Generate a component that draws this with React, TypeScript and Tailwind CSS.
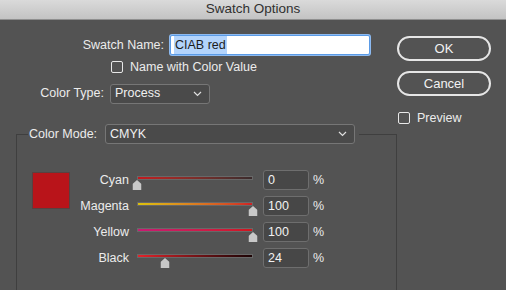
import React from 'react';

type Channel = {
  name: string;
  value: number;
  track: string;
};

const channels: Channel[] = [
  { name: 'Cyan', value: 0, track: 'bg-linear-to-r from-[#c4171d] to-[#3a2b2c]' },
  { name: 'Magenta', value: 100, track: 'bg-linear-to-r from-[#dcc10a] to-[#cf2024]' },
  { name: 'Yellow', value: 100, track: 'bg-linear-to-r from-[#c91a73] to-[#d2161b]' },
  { name: 'Black', value: 24, track: 'bg-linear-to-r from-[#e5222a] to-[#1c0405]' },
];

const font = "font-['Liberation_Sans',_Arial,_sans-serif]";

function Chevron() {
  return (
    <svg width="9" height="6" viewBox="0 0 9 6" fill="none">
      <path d="M1 1l3.5 3.5L8 1" stroke="#e0e0e0" strokeWidth="1.2" />
    </svg>
  );
}

function Select({ value, width }: { value: string; width: string }) {
  return (
    <div
      className={`${width} flex h-[20px] items-center justify-between rounded-[3px] border border-[#767676] bg-[#4a4a4a] pl-[4px] pr-[7px]`}
    >
      <span className="text-[12.5px] text-[#f0f0f0]">{value}</span>
      <Chevron />
    </div>
  );
}

function Checkbox({ label }: { label: string }) {
  return (
    <div className="flex h-[12px] items-center gap-[7px]">
      <div className="size-[12px] rounded-[2px] border border-[#e8e8e8]" />
      <span className="text-[12.5px] leading-[12px] text-[#ececec]">{label}</span>
    </div>
  );
}

function Thumb() {
  return (
    <svg width="9" height="10" viewBox="0 0 9 10">
      <polygon points="4.5,0 9,4 9,10 0,10 0,4" fill="#c8c8c8" />
    </svg>
  );
}

function ChannelRow({ channel }: { channel: Channel }) {
  return (
    <div className="flex h-[20px] items-center">
      <span className="w-[59px] text-right text-[12.5px] text-[#ececec]">{channel.name}</span>
      <div className="relative ml-[8px] h-[20px] w-[116px]">
        <div className={`mt-[6px] h-[4px] w-full border border-[#686868] ${channel.track}`} />
        <div
          className="absolute top-[10px] -translate-x-1/2"
          style={{ left: `${channel.value}%` }}
        >
          <Thumb />
        </div>
      </div>
      <div className="ml-[10px] flex h-[20px] w-[46px] items-center rounded-[3px] border border-[#6e6e6e] bg-[#474747] pl-[4px]">
        <span className="text-[12.5px] text-[#f2f2f2]">{channel.value}</span>
      </div>
      <span className="ml-[4px] text-[12.5px] text-[#ececec]">%</span>
    </div>
  );
}

function TitleBar() {
  return (
    <div className="flex h-[20px] items-center justify-center border-b border-[#8f8f8f] bg-linear-to-b from-[#dadada] to-[#c3c3c3]">
      <span className="text-[13.5px] text-[#303030]">Swatch Options</span>
    </div>
  );
}

function ColorModeGroup() {
  return (
    <fieldset className="ml-[16px] mt-[20px] w-[381px] border border-[#3f3f3f] pb-[40px]">
      <legend className="ml-[11px] pl-[1px] pr-[4px]">
        <div className="flex items-center">
          <span className="w-[76px] text-[12.5px] text-[#ececec]">Color Mode:</span>
          <Select value="CMYK" width="w-[250px]" />
        </div>
      </legend>
      <div className="flex pl-[15px] pt-[26px]">
        <div className="mt-[2px] h-[37px] w-[38px] border border-[#5a4040] bg-[#b9141a]" />
        <div className="flex flex-col gap-[6px]">
          {channels.map((c) => (
            <ChannelRow key={c.name} channel={c} />
          ))}
        </div>
      </div>
    </fieldset>
  );
}

export default function App() {
  return (
    <div className={`${font} h-[290px] w-[506px] overflow-hidden bg-[#535353]`}>
      <TitleBar />
      <div className="flex">
        <div className="w-[397px]">
          <div className="mt-[15px] flex h-[20px] items-center gap-[6px]">
            <span className="w-[164px] text-right text-[12.5px] text-[#ececec]">Swatch Name:</span>
            <div className="flex h-[20px] w-[200px] items-center rounded-[2px] border border-[#5b9be6] bg-white pl-[3px] shadow-[0_0_0_1px_#8dbaf0]">
              <span className="bg-[#b3d4fc] px-[1px] text-[12.5px] text-[#1c1c1c]">CIAB red</span>
            </div>
          </div>
          <div className="mt-[6px] pl-[111px]">
            <Checkbox label="Name with Color Value" />
          </div>
          <div className="mt-[10px] flex h-[21px] items-center gap-[6px]">
            <span className="w-[104px] text-right text-[12.5px] text-[#ececec]">Color Type:</span>
            <Select value="Process" width="w-[100px]" />
          </div>
          <ColorModeGroup />
        </div>
        <div className="flex w-[94px] flex-col pt-[16px]">
          <button className="h-[25px] w-[94px] rounded-full border-2 border-[#e6e6e6] text-[13px] text-[#f2f2f2]">
            OK
          </button>
          <button className="mt-[10px] h-[25px] w-[94px] rounded-full border-2 border-[#e6e6e6] text-[13px] text-[#f2f2f2]">
            Cancel
          </button>
          <div className="mt-[16px] pl-[1px]">
            <Checkbox label="Preview" />
          </div>
        </div>
      </div>
    </div>
  );
}
